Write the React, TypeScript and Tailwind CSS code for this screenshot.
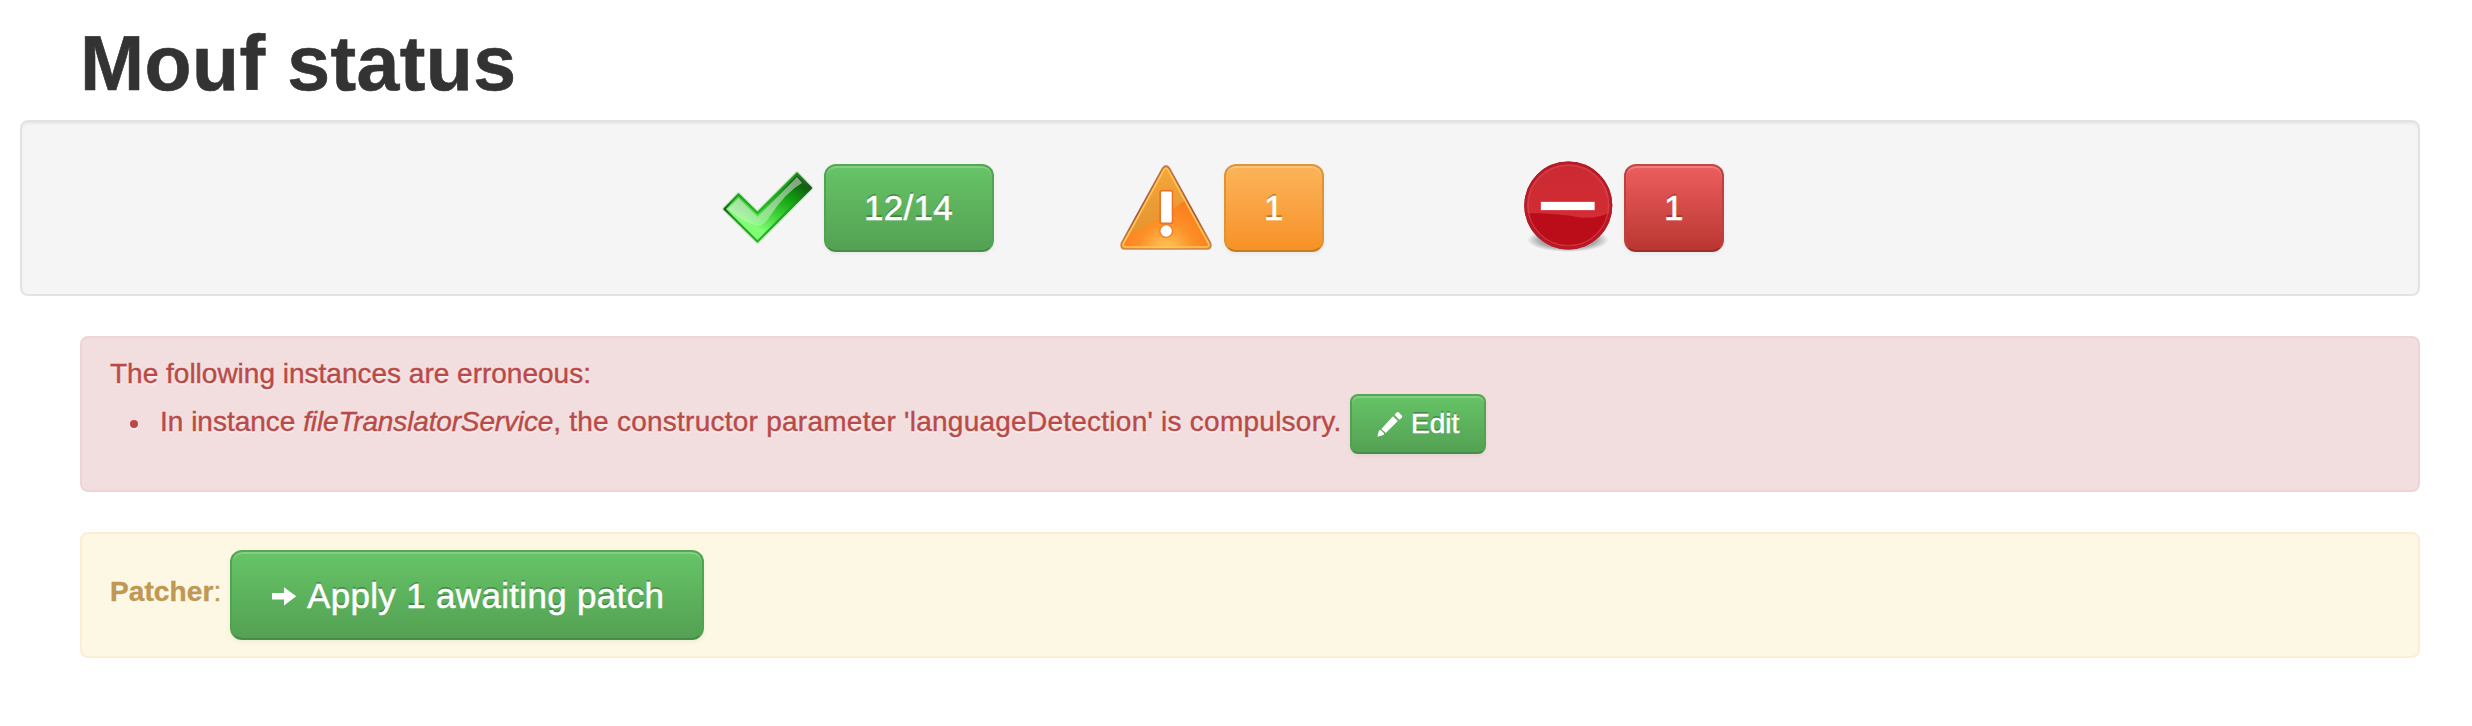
import type { ReactNode } from "react";

const green =
  "border-[#51a351] border-t-[#56a656] border-b-[#488d48] bg-linear-to-b from-[#67c567] to-[#53a053]";
const orange =
  "border-[#dc9434] border-t-[#dc973e] border-b-[#c27c28] bg-linear-to-b from-[#fbb45a] to-[#f79122]";
const red =
  "border-[#bd423d] border-t-[#c24844] border-b-[#97302c] bg-linear-to-b from-[#ee5f5f] to-[#b93530]";

function Button({ tone, size, children }: { tone: string; size: string; children: ReactNode }) {
  return (
    <button
      className={`flex shrink-0 items-center border-2 bg-origin-border whitespace-nowrap text-white shadow-[inset_0_2px_0_rgba(255,255,255,0.2),0_2px_4px_rgba(0,0,0,0.05)] [-webkit-text-stroke:0.5px_white] [text-shadow:0_-2px_0_rgba(0,0,0,0.25)] ${tone} ${size}`}
    >
      {children}
    </button>
  );
}

function CheckIcon() {
  return (
    <svg viewBox="0 0 96 96" className="size-24 shrink-0">
      <defs>
        <linearGradient id="checkFill" gradientUnits="userSpaceOnUse" x1="82" y1="16" x2="46" y2="84">
          <stop offset="0" stopColor="#2c5a2b" />
          <stop offset="0.14" stopColor="#0d650c" />
          <stop offset="0.36" stopColor="#12a010" />
          <stop offset="0.66" stopColor="#43d83c" />
          <stop offset="0.9" stopColor="#80ff76" />
        </linearGradient>
        <linearGradient id="checkEdge" x1="0" y1="0" x2="1" y2="0">
          <stop offset="0" stopColor="#1d521d" />
          <stop offset="0.1" stopColor="#1f9a1f" />
          <stop offset="0.4" stopColor="#23b522" />
          <stop offset="0.8" stopColor="#1f9a1e" />
          <stop offset="1" stopColor="#234a23" />
        </linearGradient>
        <linearGradient id="checkGloss" gradientUnits="userSpaceOnUse" x1="0" y1="18" x2="0" y2="70">
          <stop offset="0" stopColor="#f4e8f4" stopOpacity="0.5" />
          <stop offset="0.65" stopColor="#efe6ef" stopOpacity="0.52" />
          <stop offset="1" stopColor="#fff" stopOpacity="0.2" />
        </linearGradient>
      </defs>
      <path d="M4.500 51 L18.500 36.500 L37.500 55 L77 15.500 L91 30 L37.500 83.500 Z" fill="none" stroke="#8fdc8a" strokeOpacity="0.5" strokeWidth="4.500" strokeLinejoin="round" />
      <path d="M4.500 51 L18.500 36.500 L37.500 55 L77 15.500 L91 30 L37.500 83.500 Z" fill="url(#checkFill)" stroke="url(#checkEdge)" strokeWidth="2.200" strokeLinejoin="round" />
      <path d="M8 51 L18.500 40 L37.500 59 L77 19 L82 25 Q66 34 50 58 Q44 68 37.500 68 Q22 64 8 51 Z" fill="url(#checkGloss)" />
    </svg>
  );
}

function WarningIcon() {
  return (
    <svg viewBox="0 0 96 96" className="size-24 shrink-0">
      <defs>
        <radialGradient id="warnFill" gradientUnits="userSpaceOnUse" cx="46" cy="92" r="50">
          <stop offset="0" stopColor="#ffc75a" />
          <stop offset="0.55" stopColor="#fd9028" />
          <stop offset="1" stopColor="#fb7d1c" />
        </radialGradient>
        <linearGradient id="warnEdge" x1="0" y1="0" x2="0" y2="1">
          <stop offset="0" stopColor="#c0764a" />
          <stop offset="0.6" stopColor="#a05a48" />
          <stop offset="1" stopColor="#d08a50" />
        </linearGradient>
        <linearGradient id="warnGloss" x1="0" y1="0" x2="0" y2="1">
          <stop offset="0" stopColor="#f3a73a" />
          <stop offset="1" stopColor="#e6932f" />
        </linearGradient>
      </defs>
      <path d="M42.500 10.500 Q46 5 49.500 10.500 L90.500 85 Q92 91 87 91 H5 Q0 91 1.500 85 Z" fill="url(#warnFill)" stroke="url(#warnEdge)" strokeWidth="1.600" />
      <path d="M44 12 Q46 9 48 12 L64.500 43 Q42 60 8 78 Z" fill="url(#warnGloss)" />
      <path d="M43.800 12 Q46 8.500 48.200 12 L88.600 85.500 Q89.500 89 86.500 89 H5.500 Q2.500 89 3.400 85.500 Z" fill="none" stroke="#ffc552" strokeWidth="1.700" />
      <rect x="40.500" y="33" width="11.500" height="32" rx="1.500" fill="none" stroke="#ee7325" strokeWidth="2.500" />
      <circle cx="46.200" cy="73" r="6" fill="none" stroke="#f47a26" strokeWidth="2" />
      <rect x="41" y="33.500" width="10.700" height="31" rx="1" fill="#fff" />
      <circle cx="46.200" cy="73" r="5.700" fill="#fff" />
    </svg>
  );
}

function ErrorIcon() {
  return (
    <svg viewBox="0 0 96 96" className="size-24 shrink-0">
      <defs>
        <radialGradient id="stopShadow">
          <stop offset="0" stopColor="#000" stopOpacity="0.6" />
          <stop offset="0.7" stopColor="#000" stopOpacity="0.3" />
          <stop offset="1" stopColor="#000" stopOpacity="0" />
        </radialGradient>
        <linearGradient id="stopGloss" x1="0" y1="0" x2="0" y2="1">
          <stop offset="0" stopColor="#cb2a33" />
          <stop offset="1" stopColor="#d22c34" />
        </linearGradient>
      </defs>
      <ellipse cx="48" cy="82" rx="41" ry="12" fill="url(#stopShadow)" />
      <circle cx="48.300" cy="47.500" r="44" fill="#bb0c1a" />
      <path d="M6.500 55 A42.500 42.500 0 1 1 90.300 54 Q78 61 60 59.500 Q38 55 6.500 55 Z" fill="url(#stopGloss)" />
      <circle cx="48.300" cy="47.500" r="40.300" fill="none" stroke="#dc4a54" strokeOpacity="0.6" strokeWidth="1.500" />
      <circle cx="48.300" cy="47.500" r="42.800" fill="none" stroke="#b41c28" strokeWidth="2.400" />
      <rect x="20.500" y="43.500" width="54.500" height="9" fill="#e8606a" />
      <rect x="21" y="44" width="53.500" height="8" fill="#fff" />
    </svg>
  );
}

function PencilIcon() {
  return (
    <svg viewBox="0 0 28 28" className="size-7 shrink-0" fill="#fff">
      <path d="M1.300 26.800 L3 20.600 L4.600 20 L8.200 23.600 L7.500 25 Z" />
      <path d="M5.300 19 L17 6.300 L21.800 11 L9.800 23 Z" />
      <path d="M18.600 4.800 L20.600 2.600 Q21.600 1.600 22.800 2.600 L25.800 5.600 Q26.800 6.800 25.600 7.900 L23.300 9.700 Z" />
    </svg>
  );
}

function ArrowIcon() {
  return (
    <svg viewBox="0 0 28 28" className="size-7 shrink-0" fill="#fff">
      <path d="M2 11 H14 V5.200 L26.200 14.200 L14 23.500 V17.500 H2 Z" />
    </svg>
  );
}

const large = "rounded-xl px-[38px] text-[35px] leading-10";

export default function App() {
  return (
    <div className="min-h-[726px] bg-white pt-5 pr-[52px] pl-5 font-['Liberation_Sans',Arial,sans-serif] text-[28px] leading-10 text-[#333333]">
      <h1 className="h-25 pt-[3px] pl-15 text-[77px] leading-20 font-bold tracking-[0.4px] [-webkit-text-stroke:0.6px_#333333]">Mouf status</h1>

      <section className="mb-10 flex h-44 rounded-lg border-2 border-[#e3e3e3] bg-[#f5f5f5] pt-9 pl-[698px] shadow-[inset_0_2px_2px_rgba(0,0,0,0.05)]">
        <div className="flex w-[400px] gap-2">
          <CheckIcon />
          <div className="pt-1.5">
            <Button tone={green} size={`${large} h-22 w-[170px] tracking-[0.3px]`}>12/14</Button>
          </div>
        </div>
        <div className="flex w-[400px] gap-2">
          <WarningIcon />
          <div className="pt-1.5">
            <Button tone={orange} size={`${large} h-22 w-[100px]`}>1</Button>
          </div>
        </div>
        <div className="flex w-[400px] gap-2">
          <ErrorIcon />
          <div className="pt-1.5">
            <Button tone={red} size={`${large} h-22 w-[100px]`}>1</Button>
          </div>
        </div>
      </section>

      <section className="mb-10 ml-15 h-[156px] rounded-lg border-2 border-[#eed3d7] bg-[#f2dede] pt-4 pl-7 text-[#b94a48] [-webkit-text-stroke:0.4px_#b94a48] [text-shadow:0_2px_0_rgba(255,255,255,0.5)]">
        <p>The following instances are erroneous:</p>
        <ul className="pl-5">
          <li className="flex h-15">
            <span className="mt-[26px] mr-[22px] size-2 shrink-0 rounded-full bg-current shadow-[0_2px_0_rgba(255,255,255,0.5)]" />
            <span className="w-[1190px] shrink-0 pt-2 whitespace-nowrap">
              In instance <em className="tracking-[-0.15px]">fileTranslatorService</em>
              <span className="tracking-[0.25px]">, the constructor parameter 'languageDetection' is compulsory.</span>
            </span>
            <Button tone={green} size="h-15 w-[136px] gap-[7px] rounded-lg px-6">
              <PencilIcon />
              Edit
            </Button>
          </li>
        </ul>
      </section>

      <section className="ml-15 flex h-[126px] rounded-lg border-2 border-[#fbeed5] bg-[#fcf8e3] pt-4 pl-7 text-[#c09853] [-webkit-text-stroke:0.4px_#c09853] [text-shadow:0_2px_0_rgba(255,255,255,0.5)]">
        <span className="w-[120px] shrink-0 pt-[22px] tracking-[0.1px]">
          <strong>Patcher</strong>:
        </span>
        <Button tone={green} size={`${large} h-[90px] w-[474px] gap-[9px] pt-[2px] tracking-[0.32px]`}>
          <ArrowIcon />
          Apply 1 awaiting patch
        </Button>
      </section>
    </div>
  );
}
